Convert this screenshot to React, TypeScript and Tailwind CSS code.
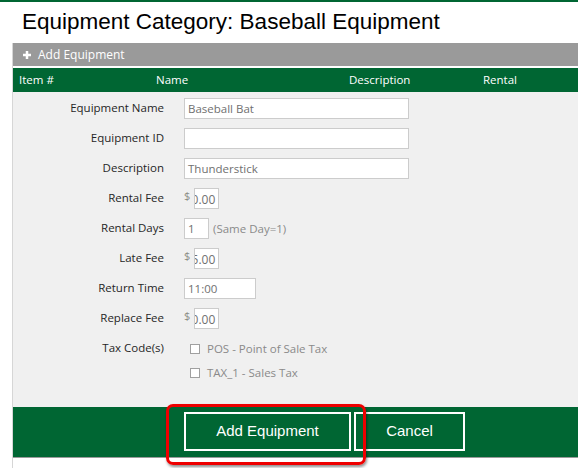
import React from "react";

const sans = { fontFamily: '"Open Sans", "Noto Sans", sans-serif' };

function Label({ children }: { children: React.ReactNode }) {
  return (
    <div className="w-[151px] shrink-0 text-right text-[11.5px] text-[#262626] -mt-[2px]">
      {children}
    </div>
  );
}

function Row({ label, children }: { label: string; children: React.ReactNode }) {
  return (
    <div className="flex h-[21px] items-center gap-[20px]">
      <Label>{label}</Label>
      <div className="flex items-center">{children}</div>
    </div>
  );
}

function TextBox({ value, w }: { value: string; w: string }) {
  return (
    <div
      className={`${w} h-[21px] border border-[#cccccc] bg-white px-[3px] text-[11.5px] leading-[20px] text-[#707070]`}
    >
      {value}
    </div>
  );
}

function FeeBox({ value }: { value: string }) {
  return (
    <div className="flex items-start">
      <span className="mt-[1px] text-[11px] leading-[14px] text-[#8c8c84]">$</span>
      <div className="ml-[4px] flex h-[21px] w-[25px] justify-end overflow-hidden border border-[#cccccc] bg-white pr-[3px] text-[12px] leading-[21px] text-[#707070]">
        <span className="whitespace-nowrap">{value}</span>
      </div>
    </div>
  );
}

function Check({ label }: { label: string }) {
  return (
    <div className="flex h-[24px] items-center">
      <div className="ml-[6px] h-[10px] w-[10px] border border-[#a0a0a0] bg-white" />
      <span className="ml-[7px] text-[11.5px] text-[#8a8a8a]">{label}</span>
    </div>
  );
}

export default function App() {
  return (
    <div className="relative h-[468px] w-[578px] overflow-hidden border-t-2 border-[#006633] bg-white">
      <h1
        className="h-[41px] pl-[22px] pt-[7px] text-[22.5px] leading-[26px] text-black"
        style={{ fontFamily: '"Liberation Sans", Arial, sans-serif' }}
      >
        Equipment Category: Baseball Equipment
      </h1>
      <div className="ml-[12px] h-[425px] border-l border-[#d6d6d6]" style={sans}>
        <div className="flex h-[23px] items-center bg-[#9a9a9a] pl-[10px] text-[12px] text-white">
          <svg width="8" height="8" viewBox="0 0 8 8" className="mr-[7px]">
            <rect x="2.75" y="0" width="2.5" height="8" fill="white" />
            <rect x="0" y="2.75" width="8" height="2.5" fill="white" />
          </svg>
          <span className="pt-[1px]">Add Equipment</span>
        </div>
        <div className="mt-[2px] flex h-[24px] items-center bg-[#006633] text-[11.5px] text-white">
          <div className="w-[143px] pl-[6px]">Item #</div>
          <div className="w-[193px]">Name</div>
          <div className="w-[134px]">Description</div>
          <div>Rental</div>
        </div>
        <div className="flex h-[315px] flex-col gap-[9px] bg-[#f0f0f0] pt-[6px]">
          <Row label="Equipment Name">
            <TextBox value="Baseball Bat" w="w-[225px]" />
          </Row>
          <Row label="Equipment ID">
            <TextBox value="" w="w-[225px]" />
          </Row>
          <Row label="Description">
            <TextBox value="Thunderstick" w="w-[225px]" />
          </Row>
          <Row label="Rental Fee">
            <FeeBox value="0.00" />
          </Row>
          <Row label="Rental Days">
            <TextBox value="1" w="w-[25px]" />
            <span className="ml-[4px] text-[11.5px] text-[#8a8a8a]">(Same Day=1)</span>
          </Row>
          <Row label="Late Fee">
            <FeeBox value="5.00" />
          </Row>
          <Row label="Return Time">
            <TextBox value="11:00" w="w-[72px]" />
          </Row>
          <Row label="Replace Fee">
            <FeeBox value="0.00" />
          </Row>
          <div className="-mt-[1px] flex gap-[20px]">
            <div className="flex h-[24px] items-center">
              <Label>Tax Code(s)</Label>
            </div>
            <div className="flex flex-col">
              <Check label="POS - Point of Sale Tax" />
              <Check label="TAX_1 - Sales Tax" />
            </div>
          </div>
        </div>
        <div className="flex h-[51px] items-center gap-[3px] border-b border-[#9a9a9a] bg-[#006633] pb-[1px] pl-[171px]">
          <div
            className="flex h-[39px] w-[167px] items-center justify-center border-2 border-white text-[15px] text-white"
            style={{ fontFamily: '"Liberation Sans", Arial, sans-serif' }}
          >
            Add Equipment
          </div>
          <div
            className="flex h-[39px] w-[111px] items-center justify-center border-2 border-white text-[15px] text-white"
            style={{ fontFamily: '"Liberation Sans", Arial, sans-serif' }}
          >
            Cancel
          </div>
        </div>
      </div>
      <div className="pointer-events-none absolute left-[166px] top-[402px] h-[61px] w-[200px] rounded-[7px] border-[3px] border-[#ee0000] shadow-[1px_2px_3px_rgba(0,0,0,0.45)]" />
    </div>
  );
}
